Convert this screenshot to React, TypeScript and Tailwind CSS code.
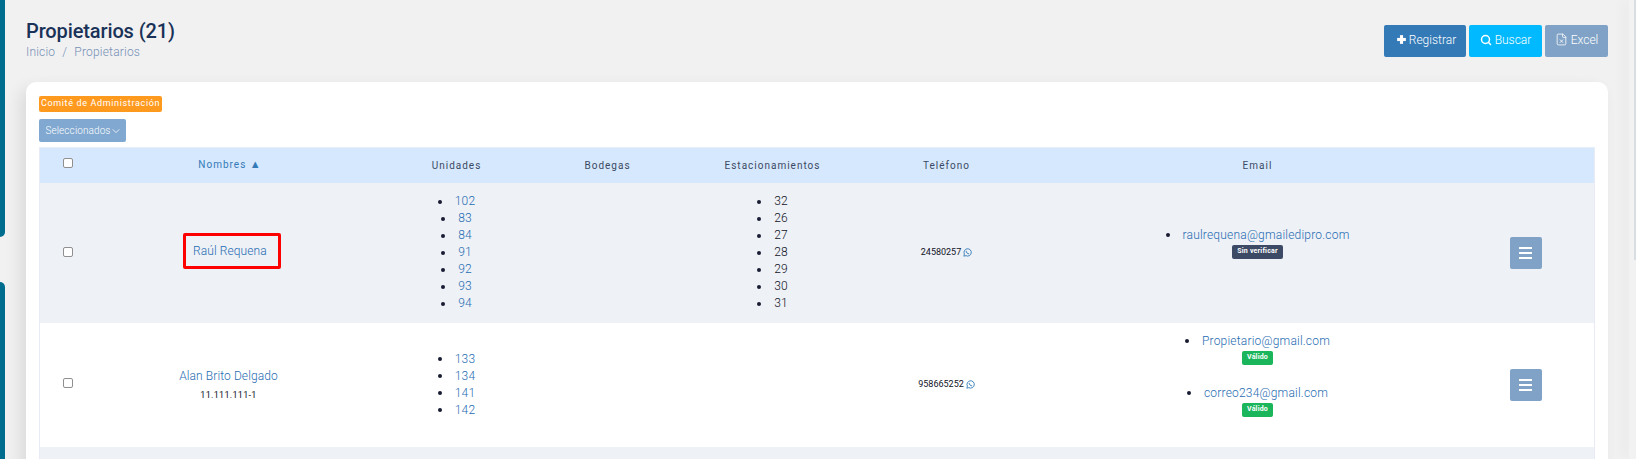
import { FileX, Plus, Search } from 'lucide-react'

const linkCls = 'text-[#1f6cb2]'

function Bullet({ children, linked }: { children: string; linked?: boolean }) {
  return (
    <li className="flex h-[17px] items-center justify-center gap-[13px] text-[12px] leading-[17px] font-light tracking-[0.2px]">
      <span className="h-1 w-1 shrink-0 rounded-full bg-[#181c32]" />
      <span className={linked ? linkCls : 'text-[#10131f]'}>{children}</span>
    </li>
  )
}

function Units({ items, linked }: { items: string[]; linked?: boolean }) {
  return (
    <ul>
      {items.map((item) => (
        <Bullet key={item} linked={linked}>{item}</Bullet>
      ))}
    </ul>
  )
}

function WhatsApp() {
  return (
    <svg viewBox="0 0 16 16" className="ml-0.5 inline-block h-[9px] w-[9px] text-[#337ab7]" fill="none" stroke="currentColor" strokeWidth="1.6">
      <path d="M1.5 14.5l1-3.6A6.5 6.5 0 1 1 5.2 13.6z" />
      <path d="M5.5 5c0 3 2.5 5.5 5.5 5.5" />
    </svg>
  )
}

function Email({ address, status, ok }: { address: string; status: string; ok?: boolean }) {
  return (
    <div className="mb-[20px] flex flex-col items-center">
      <ul>
        <Bullet linked>{address}</Bullet>
      </ul>
      <span className={`mt-[1px] flex h-[14px] items-center rounded-[2px] px-[5px] text-[7px] font-bold tracking-[0.2px] text-white ${ok ? 'bg-[#1bb55c]' : 'bg-[#3c4a66]'}`}>
        {status}
      </span>
    </div>
  )
}

function RowMenu() {
  return (
    <button className="flex h-8 w-8 items-center justify-center rounded-[2px] bg-[#80a2c6]">
      <svg viewBox="0 0 13 12" className="h-3 w-[13px] fill-white">
        <rect y="0" width="13" height="2" />
        <rect y="5" width="13" height="2" />
        <rect y="10" width="13" height="2" />
      </svg>
    </button>
  )
}

function Check({ tight }: { tight?: boolean }) {
  return (
    <div className={`flex justify-center ${tight ? 'pb-[2px]' : 'pb-[4px]'}`}>
      <input type="checkbox" className="block h-[10px] w-[10px] appearance-none rounded-[2px] border border-[#8f8f8f] bg-white" />
    </div>
  )
}

export default function App() {
  return (
    <div className="flex h-[459px] overflow-hidden bg-[#f1f1f2] font-['Roboto',sans-serif] text-[#181c32]">
      <aside className="flex w-[5px] shrink-0 flex-col justify-between">
        <div className="h-[237px] rounded-br-[6px] bg-[#006d8f]" />
        <div className="h-[177px] rounded-tr-[6px] bg-[#006d8f]" />
      </aside>

      <main className="min-w-0 flex-1 pl-[21px] pr-[21px]">
        <header className="flex h-[82px] items-start justify-between">
          <div className="pt-[19px]">
            <h1 className="text-[20px] leading-[24px] font-medium tracking-[-0.12px] text-[#1a3158]">Propietarios (21)</h1>
            <p className="mt-[1px] flex gap-[7px] text-[12px] leading-[16px] font-light tracking-[0.2px] text-[#7590b4]">
              <span>Inicio</span>
              <span>/</span>
              <span>Propietarios</span>
            </p>
          </div>
          <div className="mt-[25px] flex gap-[3px] text-[12px] font-light text-white">
            <button className="flex h-8 w-[82px] items-center justify-center rounded-[2px] bg-[#337ab7] pb-[3px]">
              <Plus size={15} strokeWidth={5} strokeLinecap="butt" />
              Registrar
            </button>
            <button className="flex h-8 w-[73px] items-center justify-center gap-[3px] rounded-[2px] bg-[#00b9ff] pb-[3px]">
              <Search size={12} strokeWidth={3} />
              Buscar
            </button>
            <button className="flex h-8 w-[63px] items-center justify-center gap-[3px] rounded-[2px] bg-[#80a2c6] pb-[3px]">
              <FileX size={13} strokeWidth={1.5} />
              Excel
            </button>
          </div>
        </header>

        <section className="h-[400px] rounded-t-[10px] bg-white px-[13px] pt-[14px] shadow-[-6px_6px_16px_rgba(0,0,0,0.09)]">
          <span className="flex h-4 w-[123px] items-center justify-center rounded-[2px] bg-[#ff9a1f] text-[9px] tracking-[0.65px] text-white">
            Comité de Administración
          </span>
          <button className="mt-[7px] flex h-[23px] w-[87px] items-center justify-center gap-[1px] rounded-[2px] bg-[#80a8d0] text-[10px] font-light tracking-[0.1px] text-white">
            Seleccionados
            <svg viewBox="0 0 10 10" className="h-2 w-2" fill="none" stroke="currentColor"><path d="M1 3l4 4 4-4" /></svg>
          </button>

          <table className="mt-[5px] w-full table-fixed border-collapse border-x border-[#e8eaf5] text-center">
            <colgroup>
              <col className="w-[56px]" />
              <col className="w-[266px]" />
              <col className="w-[190px]" />
              <col className="w-[112px]" />
              <col className="w-[218px]" />
              <col className="w-[130px]" />
              <col className="w-[492px]" />
              <col />
            </colgroup>
            <thead>
              <tr className="h-[35px] border-t border-[#e8eef5] bg-[#d6e8fd] text-[10px] tracking-[1px] text-[#3a4a63]">
                <th className="font-normal"><Check /></th>
                <th className="pl-[2px] font-normal text-[#337ab7]">Nombres <span className="text-[11px] tracking-normal">▲</span></th>
                <th className="font-normal">Unidades</th>
                <th className="font-normal">Bodegas</th>
                <th className="font-normal">Estacionamientos</th>
                <th className="font-normal">Teléfono</th>
                <th className="font-normal">Email</th>
                <th />
              </tr>
            </thead>
            <tbody>
              <tr className="h-[140px] bg-[#eef1f6]">
                <td><Check tight /></td>
                <td>
                  <div className="flex justify-center pb-[4px] pl-[7px]">
                    <span className={`flex h-[36px] w-[98px] items-center rounded-[2px] border-[3px] border-[#ff0000] pl-[7px] text-[12px] font-light tracking-[0.1px] ${linkCls}`}>Raúl Requena</span>
                  </div>
                </td>
                <td><Units linked items={['102', '83', '84', '91', '92', '93', '94']} /></td>
                <td />
                <td><Units items={['32', '26', '27', '28', '29', '30', '31']} /></td>
                <td className="text-[9px] text-[#10131f]">24580257<WhatsApp /></td>
                <td><Email address="raulrequena@gmailedipro.com" status="Sin verificar" /></td>
                <td className="pl-[6px]"><RowMenu /></td>
              </tr>
              <tr className="h-[124px] bg-white">
                <td><Check /></td>
                <td>
                  <div className={`text-[12px] leading-[16px] font-light tracking-[0.1px] ${linkCls}`}>Alan Brito Delgado</div>
                  <div className="mt-[5px] text-[9px] leading-[12px] tracking-[0.3px] text-[#10131f]">11.111.111-1</div>
                </td>
                <td><Units linked items={['133', '134', '141', '142']} /></td>
                <td />
                <td />
                <td className="text-[9px] text-[#10131f]">958665252<WhatsApp /></td>
                <td>
                  <Email address="Propietario@gmail.com" status="Válido" ok />
                  <Email address="correo234@gmail.com" status="Válido" ok />
                </td>
                <td className="pl-[6px]"><RowMenu /></td>
              </tr>
              <tr className="h-[12px] bg-[#eef1f6]"><td colSpan={8} /></tr>
            </tbody>
          </table>
        </section>
      </main>

      <div className="z-10 flex w-[7px] shrink-0 justify-end bg-[#f2f2f3] shadow-[-6px_0_12px_rgba(0,0,0,0.04)]">
        <div className="h-[260px] w-[2px] bg-[#d8dde2]" />
      </div>
    </div>
  )
}
